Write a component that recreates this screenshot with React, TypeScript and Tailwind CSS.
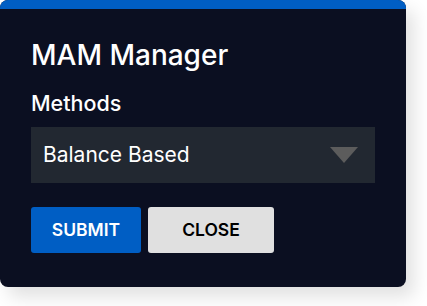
export default function App() {
  return (
    <div className="h-[306px] w-[427px] bg-white" style={{ fontFamily: 'Inter, "Noto Sans", sans-serif' }}>
      <div className="flex h-[287px] w-[406px] flex-col overflow-hidden rounded-lg bg-[#0b0f21] shadow-[8px_10px_18px_rgba(0,0,0,0.12)]">
        <div className="h-[9px] bg-[#005ec4]" />
        <div className="flex flex-col px-[31px] pt-[30px]">
          <h1 className="text-[28px] font-medium leading-[32px] text-white">MAM Manager</h1>
          <label className="mt-[20px] text-[21.5px] font-medium leading-[24px] text-white">Methods</label>
          <div className="mt-[12px] flex h-[56px] w-[344px] items-center justify-between bg-[#222831] pl-[12px] pr-[17px]">
            <span className="text-[21px] text-white">Balance Based</span>
            <svg width="28" height="16" viewBox="0 0 28 16">
              <polygon points="0,0 28,0 14,16" fill="#5c5c5c" />
            </svg>
          </div>
          <div className="mt-[24px] flex gap-[7px]">
            <button className="h-[46px] w-[110px] rounded-[3px] bg-[#005ec4] text-[17.5px] font-semibold text-white">SUBMIT</button>
            <button className="h-[46px] w-[126px] rounded-[3px] bg-[#e0e0e0] text-[17.5px] font-semibold text-black">CLOSE</button>
          </div>
        </div>
      </div>
    </div>
  );
}
